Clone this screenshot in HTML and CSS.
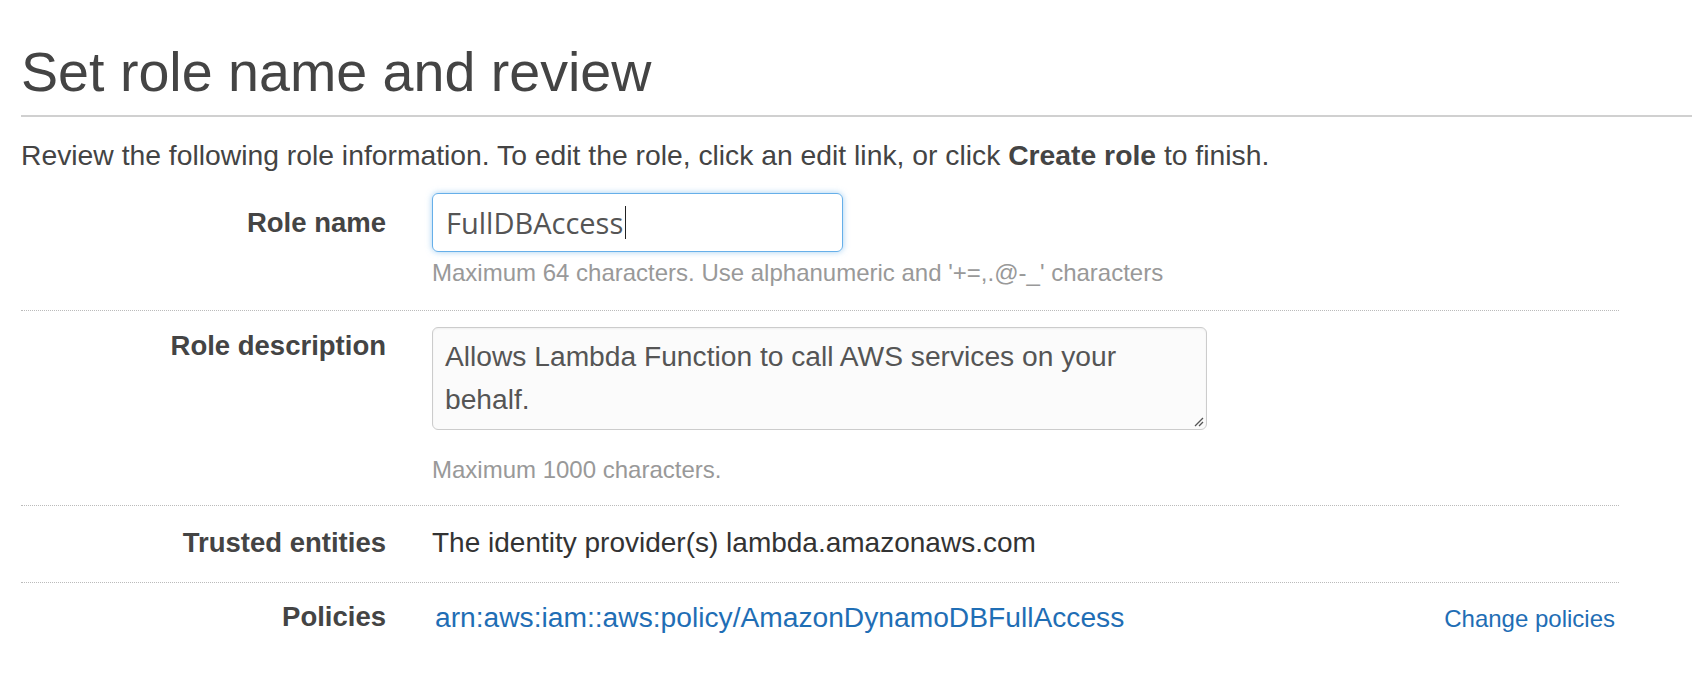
FILE: index.html
```html
<!DOCTYPE html>
<html lang="en">
<head>
<meta charset="utf-8">
<title>Set role name and review</title>
<link rel="stylesheet" href="styles.css">
</head>
<body>
<div class="page">
  <h1 class="title">Set role name and review</h1>
  <div class="rule"></div>
  <p class="intro">Review the following role information. To edit the role, click an edit link, or click <b>Create role</b> to finish.</p>
  <div class="rows">
    <div class="row row-name">
      <div class="label label-name">Role name</div>
      <div class="value">
        <div class="input"><span class="input-text">FullDBAccess</span><span class="caret"></span></div>
        <div class="hint hint-name">Maximum 64 characters. Use alphanumeric and '+=,.@-_' characters</div>
      </div>
    </div>
    <div class="row row-desc">
      <div class="label label-desc">Role description</div>
      <div class="value">
        <div class="textarea">Allows Lambda Function to call AWS services on your behalf.<svg class="grip" width="12" height="12" viewBox="0 0 12 12"><path d="M11 3 L3 11 M11 7 L7 11" stroke="#555" stroke-width="1.3" fill="none"/></svg></div>
        <div class="hint hint-desc">Maximum 1000 characters.</div>
      </div>
    </div>
    <div class="row row-trust">
      <div class="label">Trusted entities</div>
      <div class="value text">The identity provider(s) lambda.amazonaws.com</div>
    </div>
    <div class="row row-pol">
      <div class="label">Policies</div>
      <div class="value text split">
        <a class="link policy" href="#">arn:aws:iam::aws:policy/AmazonDynamoDBFullAccess</a>
        <a class="link small" href="#">Change policies</a>
      </div>
    </div>
  </div>
</div>
</body>
</html>
```

FILE: styles.css
```css
html, body {
  margin: 0;
  padding: 0;
  background: #fff;
}
body {
  font-family: "Liberation Sans", Arial, Helvetica, sans-serif;
  color: #444;
}
.page {
  padding-left: 21px;
}
.title {
  margin: 0;
  padding-top: 40px;
  font-size: 55.6px;
  line-height: 64px;
  font-weight: normal;
  color: #444;
}
.rule {
  margin-top: 11px;
  height: 2px;
  background: #d0d0d0;
}
.intro {
  margin: 21px 0 0;
  font-size: 28.3px;
  line-height: 34px;
  color: #444;
}
.intro b {
  font-weight: bold;
}
.rows {
  width: 1598px;
  margin-top: 11px;
}
.row {
  display: grid;
  grid-template-columns: 365px 1fr;
  column-gap: 46px;
  border-bottom: 1px dotted #bbb;
}
.row:last-child {
  border-bottom: none;
}
.label {
  text-align: right;
  font-weight: bold;
  font-size: 27.5px;
  line-height: 34px;
  color: #444;
}
.row-name {
  padding: 10px 0 22px;
}
.label-name {
  margin-top: 13px;
}
.input {
  box-sizing: border-box;
  width: 411px;
  height: 59px;
  border: 1px solid #66afe9;
  border-radius: 6px;
  box-shadow: 0 0 6px rgba(102, 175, 233, 0.6);
  padding: 0 13px;
  display: flex;
  align-items: center;
  font-family: "Open Sans", "Noto Sans", sans-serif;
  font-size: 29px;
  color: #555;
}
.caret {
  display: inline-block;
  width: 1px;
  height: 33px;
  background: #222;
  margin-left: 2px;
}
.hint {
  font-size: 24px;
  line-height: 30px;
  color: #999;
}
.hint-name {
  margin-top: 6px;
}
.row-desc {
  padding: 16px 0 20px;
}
.label-desc {
  margin-top: 2px;
}
.textarea {
  position: relative;
  box-sizing: border-box;
  width: 775px;
  height: 103px;
  border: 1px solid #ccc;
  border-radius: 6px;
  background: #fbfbfb;
  box-shadow: inset 0 1px 2px rgba(0, 0, 0, 0.05);
  padding: 7px 12px;
  font-size: 28.2px;
  line-height: 43px;
  color: #555;
}
.grip {
  position: absolute;
  right: 2px;
  bottom: 2px;
}
.hint-desc {
  margin-top: 25px;
}
.text {
  font-size: 28px;
  line-height: 34px;
  color: #333;
}
.row-trust {
  padding: 20px 0 22px;
}
.row-pol {
  padding: 17px 0 20px;
}
.split {
  display: flex;
  justify-content: space-between;
  align-items: baseline;
  padding-right: 4px;
}
.link {
  color: #1f6eb5;
  text-decoration: none;
}
.link.policy {
  margin-left: 3px;
  font-size: 28.2px;
}
.link.small {
  font-size: 24px;
}
```
